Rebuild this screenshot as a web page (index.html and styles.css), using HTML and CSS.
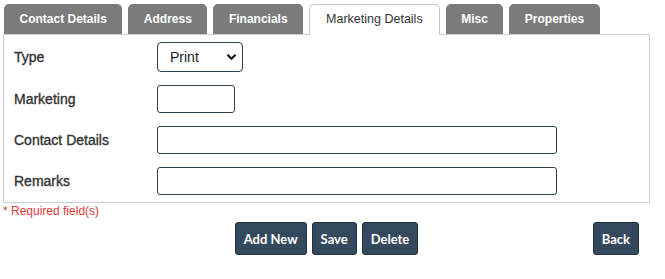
FILE: index.html
```html
<!DOCTYPE html>
<html>
<head>
 <meta charset="utf-8"/>
 <title>Marketing Details</title>
 <link rel="stylesheet" href="styles.css">
</head>
<body>
<div class="page">

 <ul class="tabs">
  <li class="tab">Contact Details</li>
  <li class="tab">Address</li>
  <li class="tab">Financials</li>
  <li class="tab active">Marketing Details</li>
  <li class="tab">Misc</li>
  <li class="tab">Properties</li>
 </ul>

 <div class="panel">
  <div class="row">
   <label class="lbl">Type</label>
   <div class="sel">
    <span>Print</span>
    <svg width="11" height="8" viewBox="0 0 11 8"><path d="M1.5 1.8 L5.5 5.8 L9.5 1.8" fill="none" stroke="#111" stroke-width="2.2"/></svg>
   </div>
  </div>
  <div class="row">
   <label class="lbl">Marketing</label>
   <input class="txt short" type="text">
  </div>
  <div class="row">
   <label class="lbl">Contact Details</label>
   <input class="txt wide" type="text">
  </div>
  <div class="row">
   <label class="lbl">Remarks</label>
   <input class="txt wide" type="text">
  </div>
 </div>

 <p class="req">* Required field(s)</p>

 <div class="actions">
  <div></div>
  <div class="group">
   <button class="btn">Add New</button>
   <button class="btn">Save</button>
   <button class="btn">Delete</button>
  </div>
  <button class="btn back">Back</button>
 </div>

</div>
</body>
</html>
```

FILE: styles.css
```css
body {
 margin: 0;
 font-family: "Liberation Sans", Arial, sans-serif;
 font-size: 13px;
 color: #333;
 background: #fff; }
.page {
 width: 647px;
 padding: 4px 0 0 3px; }
.tabs {
 list-style: none;
 margin: 0;
 padding: 0 0 0 1px;
 display: flex;
 gap: 6px;
 position: relative;
 z-index: 1; }
.tab {
 height: 29px;
 line-height: 29px;
 padding: 0 14.5px;
 border: 1px solid #7b7b7b;
 border-bottom: none;
 border-radius: 5px 5px 0 0;
 background: #7b7b7b;
 color: #fff;
 font-size: 12px;
 font-weight: bold; }
.tab.active {
 height: 30px;
 padding: 0 16px;
 background: #fff;
 color: #333;
 font-size: 12.5px;
 font-weight: normal;
 border-color: #c6c6c6; }
.panel {
 border: 1px solid #cfcfcf;
 margin-top: -1px;
 padding: 7px 10px 7px 10px;
 display: flex;
 flex-direction: column;
 gap: 13px; }
.row {
 display: flex;
 align-items: center; }
.lbl {
 width: 143px;
 font-size: 14px;
 color: #333;
 -webkit-text-stroke: 0.35px #333; }
.sel {
 box-sizing: border-box;
 width: 86px;
 height: 30px;
 border: 1px solid #2c3e50;
 border-radius: 4px;
 display: flex;
 align-items: center;
 justify-content: space-between;
 padding: 0 5px 0 12px;
 font-size: 14px;
 color: #222; }
.txt {
 box-sizing: border-box;
 height: 28px;
 border: 1px solid #2c3e50;
 border-radius: 3px;
 margin: 0; }
.short { width: 78px; }
.wide { width: 400px; }
.req {
 margin: 1px 0 0 0;
 color: #e0393e;
 font-size: 12px;
 line-height: 14px; }
.actions {
 margin-top: 4px;
 display: grid;
 grid-template-columns: 1fr auto 1fr;
 align-items: center; }
.group {
 display: flex;
 gap: 5px; }
.btn {
 height: 33px;
 padding: 0 8px;
 border: 1px solid #22313f;
 border-radius: 3px;
 background: #34495e;
 color: #fff;
 font-family: Lato, "Open Sans", sans-serif;
 font-weight: bold;
 font-size: 13px; }
.back {
 justify-self: end;
 margin-right: 11px; }
```
